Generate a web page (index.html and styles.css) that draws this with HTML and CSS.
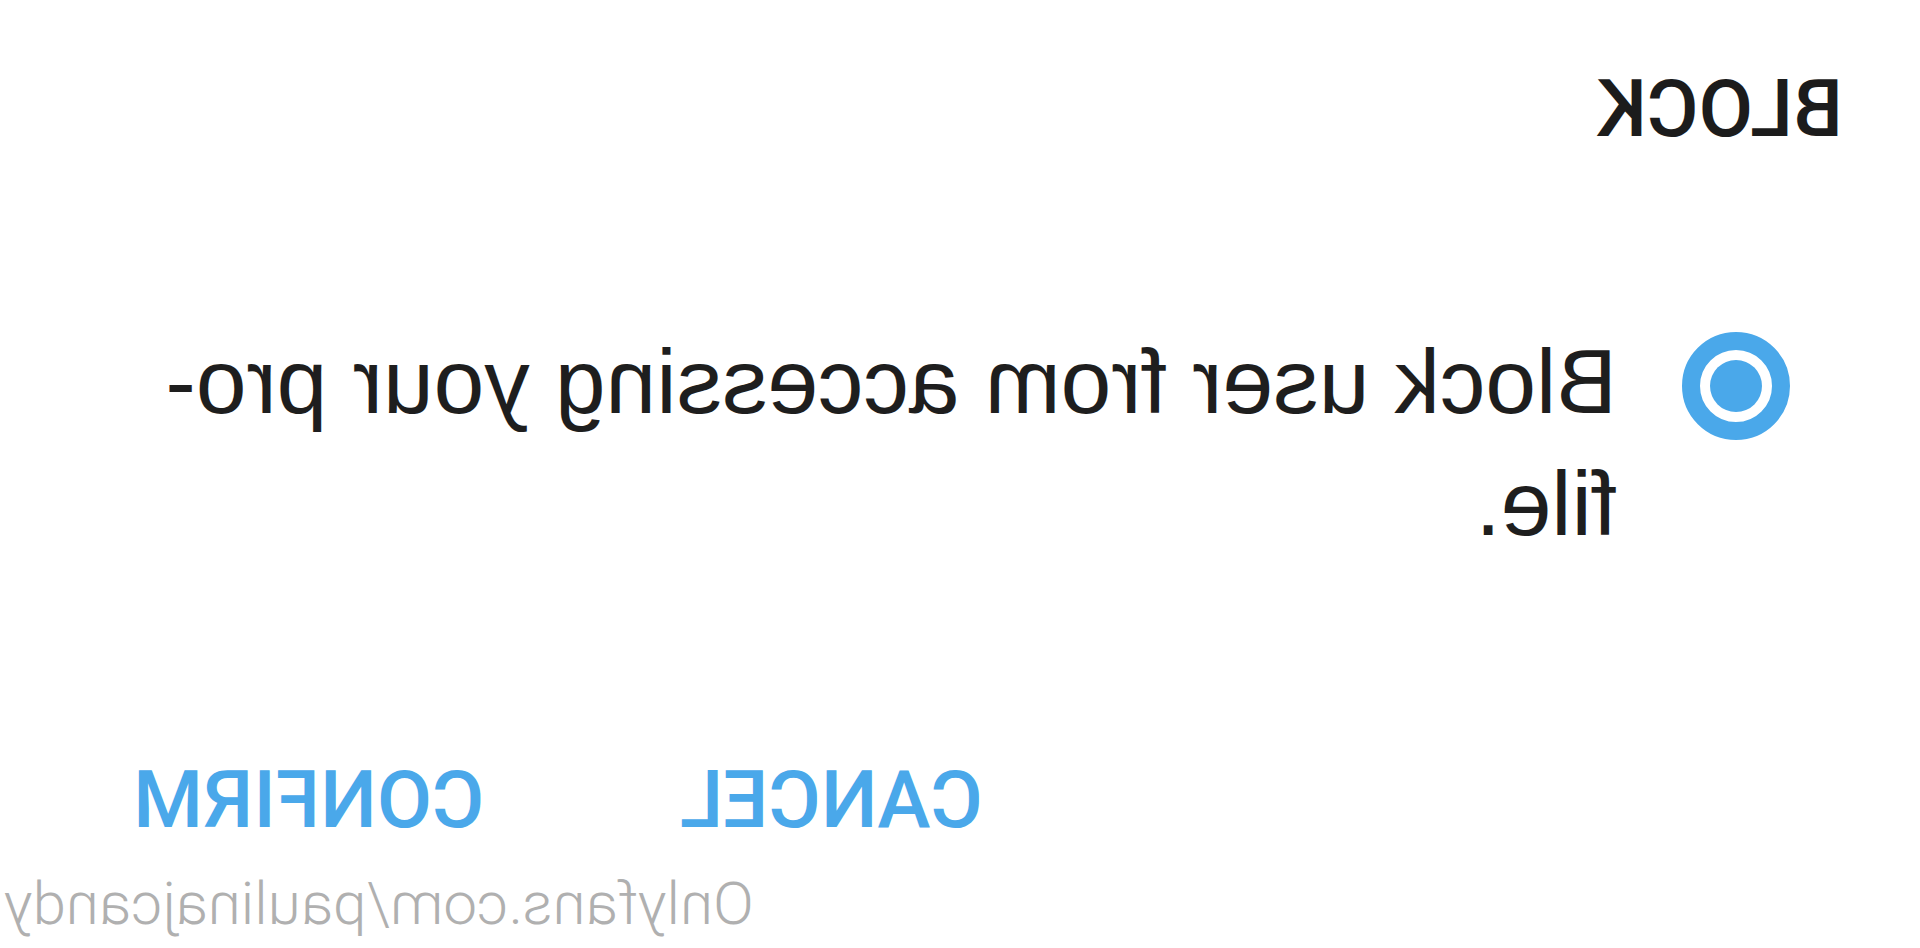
FILE: index.html
```html
<!DOCTYPE html>
<html lang="en">
<head>
<meta charset="utf-8">
<title>Block</title>
<link rel="stylesheet" href="styles.css">
</head>
<body>
<div class="page">
  <div class="title">BLOCK</div>
  <div class="option">
    <span class="radio"><span class="dot"></span></span>
    <div class="label">Block user from accessing your pro-<br>file.</div>
  </div>
  <div class="actions">
    <span class="btn">CANCEL</span>
    <span class="btn">CONFIRM</span>
  </div>
  <div class="watermark">Onlyfans.com/paulinajcandy</div>
</div>
</body>
</html>
```

FILE: styles.css
```css
html, body {
  margin: 0;
  padding: 0;
  background: #ffffff;
}

.page {
  width: 1920px;
  height: 948px;
  box-sizing: border-box;
  padding: 70px 0 0 77px;
  overflow: hidden;
  transform: scaleX(-1);
  display: flex;
  flex-direction: column;
}

.title {
  font-family: Roboto, "Liberation Sans", sans-serif;
  font-weight: 500;
  font-size: 79px;
  line-height: 78px;
  color: #1c1c1c;
}

.option {
  display: flex;
  align-items: flex-start;
  gap: 65px;
  margin: 173px 0 0 53px;
}

.radio {
  flex: none;
  width: 108px;
  height: 108px;
  box-sizing: border-box;
  border: 18px solid #4aa8ea;
  border-radius: 50%;
  margin-top: 11px;
  display: flex;
  align-items: center;
  justify-content: center;
}

.dot {
  width: 52px;
  height: 52px;
  border-radius: 50%;
  background: #4aa8ea;
}

.label {
  font-family: "Liberation Sans", Arial, sans-serif;
  font-size: 91px;
  line-height: 122px;
  color: #1e1e1e;
}

.actions {
  display: flex;
  justify-content: flex-end;
  gap: 196px;
  margin-top: 196px;
  padding-right: 133px;
}

.btn {
  font-family: Roboto, "Liberation Sans", sans-serif;
  font-weight: 500;
  font-size: 80px;
  line-height: 78px;
  color: #4aa8ea;
}

.watermark {
  margin-top: 35px;
  padding-right: 4px;
  text-align: right;
  font-family: Roboto, "Liberation Sans", sans-serif;
  font-weight: 300;
  font-size: 60px;
  line-height: 59px;
  color: #b0b0b0;
}
```
